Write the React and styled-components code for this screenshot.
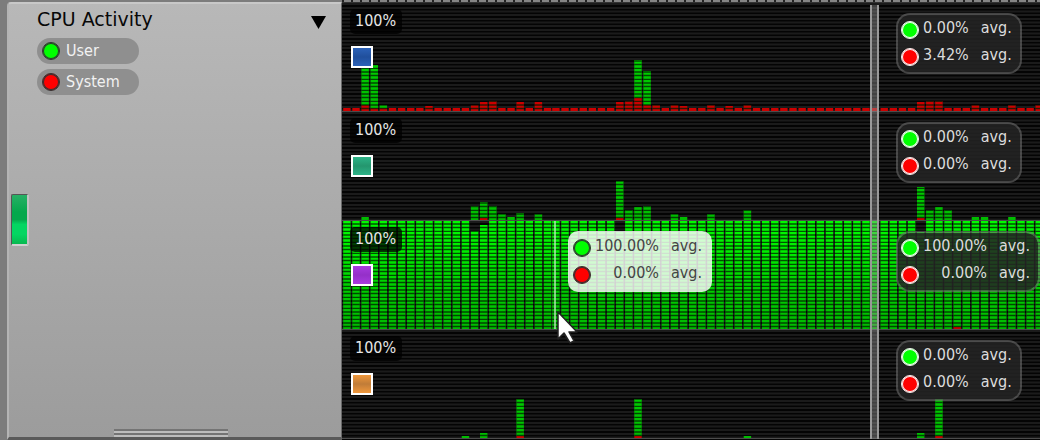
import React from "react";
import styled, { createGlobalStyle, css } from "styled-components";

const GlobalStyle = createGlobalStyle`
  * { box-sizing: border-box; }
  body {
    margin: 0;
    background: #050505;
    color: #ddd;
    font: 16px/20px "DejaVu Sans Condensed", "DejaVu Sans", sans-serif;
  }
  h1, ul, p { margin: 0; padding: 0; }
`;

const Page = styled.main`
  display: grid;
  grid-template-columns: 342px 1fr;
  min-height: 100vh;
  overflow: hidden;
`;

const Sidebar = styled.aside`
  display: flex;
  padding: 2px 0 0 7px;
  background: #7c7c7c;
`;

const Panel = styled.section`
  flex: 1;
  display: grid;
  grid-template-columns: 28px 1fr;
  grid-template-rows: 1fr auto;
  border: 2px solid #c8c8c8;
  border-right: 1px solid #686868;
  border-bottom: 3px solid #5a5a5a;
  border-left-color: #b4b4b4;
  border-radius: 4px 0 0 0;
  background: linear-gradient(#b8b8b8, #9c9c9c);
`;

const Level = styled.div`
  align-self: center;
  width: 18px;
  height: 52px;
  margin: 6px 0 0 2px;
  border: 1px solid #555;
  border-right: 2px solid #c2c2c2;
  border-bottom: 2px solid #d0d0d0;
  border-radius: 2px;
  background: linear-gradient(#27b066, #04a84c 35%, #04a84c 50%, #04d662 60%, #04d662 80%, #08b850);
`;

const Content = styled.div`
  display: flex;
  flex-direction: column;
  gap: 5px;
  padding: 1px 15px 0 0;
`;

const Header = styled.header`
  display: flex;
  justify-content: space-between;
  align-items: center;
  height: 28px;
`;

const Title = styled.h1`
  color: #080808;
  font: 19px/26px "DejaVu Sans", sans-serif;
`;

const Disclosure = styled.button`
  display: flex;
  padding: 6px 0 0;
  border: 0;
  background: none;
`;

const Legend = styled.ul`
  display: flex;
  flex-direction: column;
  gap: 5px;
  list-style: none;
`;

const LegendItem = styled.li`
  display: flex;
  align-items: center;
  gap: 6px;
  width: 102px;
  height: 26px;
  padding-left: 5px;
  border-radius: 13px;
  background: #8f8f8f;
  color: #f2f2f2;
`;

const Dot = styled.span`
  flex: none;
  width: 18px;
  height: 18px;
  border: 1px solid ${(p) => p.$ring};
  border-radius: 50%;
  background: ${(p) => p.$color};
  box-shadow: inset 0 0 0 1px ${(p) => p.$ring};
`;

const Grip = styled.div`
  grid-column: 1 / -1;
  justify-self: center;
  width: 114px;
  height: 8px;
  margin-right: 9px;
  border: solid #747474;
  border-width: 2px 0 0;
  background: linear-gradient(#bdbdbd 2px, #747474 2px 4px, #bdbdbd 4px);
`;

const Charts = styled.section`
  position: relative;
  min-width: 0;
  overflow: hidden;
`;

const Ruler = styled.div`
  height: 3px;
  border-bottom: 1px solid #333;
  background: repeating-linear-gradient(90deg, #222 0 2px, #858585 2px 9px);
`;

const Lane = styled.article`
  position: relative;
  display: flex;
  flex-direction: column;
  align-items: flex-start;
  gap: 12px;
  height: 109px;
  padding: 6px 8px;
  border-bottom: 1px solid #4c4c4c;
`;

const Plot = styled.svg`
  position: absolute;
  inset: 0;
  width: 100%;
  height: 100%;
`;

const Scale = styled.p`
  position: relative;
  height: 25px;
  padding: 2px 6px 3px 5px;
  border-radius: 5px;
  background: rgba(0, 0, 0, 0.75);
  color: #e6e6e6;
`;

const Swatch = styled.span`
  position: relative;
  width: 22px;
  height: 22px;
  margin-left: 1px;
  border: 2px solid #fff;
  background: linear-gradient(${(p) => p.$tone[0]}, ${(p) => p.$tone[1]} 50%, ${(p) => p.$tone[0]});
`;

const Readout = styled.div`
  position: absolute;
  top: 10px;
  left: ${(p) => p.$left}px;
  display: flex;
  flex-direction: column;
  gap: 7px;
  padding: 3px 8px 7px 3px;
  border: 2px solid rgba(110, 110, 110, 0.6);
  border-radius: 14px;
  background: rgba(36, 36, 36, 0.86);
  background-clip: padding-box;
  color: #dcdcdc;
  ${(p) =>
    p.$light &&
    css`
      border-color: transparent;
      border-radius: 10px;
      background: rgba(255, 255, 255, 0.82);
      color: #444;
    `}
`;

const ReadoutRow = styled.p`
  display: flex;
  justify-content: space-between;
  height: 20px;
  white-space: pre;
`;

const Value = styled.span`
  flex: 1;
  margin: 0 12px 0 4px;
  text-align: right;
`;

const ReadoutDot = styled(Dot)`
  margin-top: 3px;
`;

const Scrubber = styled.div`
  position: absolute;
  top: 5px;
  bottom: 1px;
  left: 528px;
  width: 9px;
  border: solid #999;
  border-width: 0 2px;
  background: rgba(160, 160, 160, 0.4);
`;

const HoverLine = styled.div`
  position: absolute;
  top: 0;
  bottom: 0;
  left: 212px;
  width: 2px;
  background: rgba(190, 235, 190, 0.7);
`;

const Pointer = styled.svg`
  position: absolute;
  top: 309px;
  left: 213px;
`;

const SPAN = 108;
const PITCH = 9.12;
const FIRST_RUN = 23;
const SAMPLES = 78;

// Samples are drawn in two runs, split where the pointer line sits.
const sampleX = (i) => (i < FIRST_RUN ? 1.2 + i * PITCH : 210.2 + (i - FIRST_RUN) * PITCH);

// Each entry maps a sample index to [total height, system height].
const lanes = [
  {
    id: "cpu0",
    tone: ["#2c62b8", "#204f9c"],
    base: [3, 3],
    user: "0.00%",
    system: "3.42%",
    data: {
      2: [46, 6], 3: [46, 3], 4: [6, 3], 9: [5, 5], 14: [6, 6], 15: [9, 9], 16: [10, 10],
      19: [9, 9], 21: [9, 9], 30: [9, 9], 31: [10, 10], 32: [51, 13], 33: [40, 6], 34: [6, 6],
      36: [6, 6], 37: [5, 5], 40: [6, 6], 42: [5, 5], 44: [6, 6], 63: [9, 9], 64: [10, 10],
      65: [10, 10], 69: [6, 6], 73: [6, 6], 76: [6, 6],
    },
  },
  {
    id: "cpu1",
    tone: ["#2db387", "#24966e"],
    base: [0, 0],
    user: "0.00%",
    system: "0.00%",
    data: {
      2: [3, 0], 14: [14, 0], 15: [18, 2], 16: [14, 0], 17: [6, 0], 18: [3, 0], 19: [7, 0],
      21: [6, 0], 30: [39, 2], 31: [10, 0], 32: [13, 0], 33: [14, 0], 36: [6, 0], 37: [3, 0],
      40: [6, 0], 44: [10, 0], 63: [33, 2], 64: [10, 0], 65: [13, 0], 66: [10, 0], 69: [3, 0],
      70: [3, 0], 73: [3, 0],
    },
  },
  {
    id: "cpu2",
    tone: ["#a83be0", "#9430c8"],
    base: [SPAN, 0],
    user: "100.00%",
    system: "0.00%",
    data: { 14: [98, 0], 15: [104, 0], 30: [97, 0], 63: [97, 0], 67: [SPAN, 2] },
  },
  {
    id: "cpu3",
    tone: ["#f0983c", "#c07c38"],
    base: [0, 0],
    user: "0.00%",
    system: "0.00%",
    data: { 13: [2, 0], 15: [5, 0], 19: [39, 2], 32: [39, 2], 44: [2, 0], 63: [5, 0], 65: [39, 2] },
  },
];

function Graph({ lane }) {
  const { id, base, data } = lane;
  const bars = Array.from({ length: SAMPLES }, (_, i) => {
    const [total, system] = data[i] || base;
    return { i, total, system };
  });
  return (
    <Plot aria-hidden="true">
      <defs>
        <linearGradient id={`${id}-user`} gradientUnits="userSpaceOnUse" x1="0" y1="0" x2="0" y2={SPAN}>
          <stop offset="0" stopColor="#00fc00" />
          <stop offset="0.3" stopColor="#00ec00" />
          <stop offset="0.65" stopColor="#00cc00" />
          <stop offset="1" stopColor="#00bc00" />
        </linearGradient>
        <pattern id={`${id}-back`} patternUnits="userSpaceOnUse" width="8" height="11">
          <rect width="8" height="11" fill="#040404" />
          <path d="M0 1h8M0 5h8M0 8.500h8" stroke="#1b1b1b" strokeWidth="2" />
        </pattern>
        <pattern id={`${id}-gaps`} patternUnits="userSpaceOnUse" width="8" height="11">
          <path d="M0 3h8M0 6.500h8M0 10.500h8" stroke="#001c00" strokeOpacity="0.75" strokeWidth="1.300" />
        </pattern>
      </defs>
      <rect width="100%" height="100%" fill={`url(#${id}-back)`} />
      {bars.map(({ i, total, system }) => (
        <React.Fragment key={i}>
          {total > system && (
            <rect x={sampleX(i)} y={SPAN - total} width="7.400" height={total - system} fill={`url(#${id}-user)`} />
          )}
          {system > 0 && <rect x={sampleX(i)} y={SPAN - system} width="7.400" height={system} fill="#cc0000" />}
          {total > 3 && (
            <rect x={sampleX(i)} y={SPAN - total} width="7.400" height={total} fill={`url(#${id}-gaps)`} />
          )}
        </React.Fragment>
      ))}
    </Plot>
  );
}

function Averages({ user, system, left, light }) {
  const ring = light ? "#333" : "#f4f4f4";
  return (
    <Readout $left={left} $light={light}>
      <ReadoutRow>
        <ReadoutDot $color="#0f0" $ring={ring} />
        <Value>{user}</Value>
        <span>avg.</span>
      </ReadoutRow>
      <ReadoutRow>
        <ReadoutDot $color="#f00" $ring={ring} />
        <Value>{system}</Value>
        <span>avg.</span>
      </ReadoutRow>
    </Readout>
  );
}

export default function App() {
  return (
    <Page>
      <GlobalStyle />
      <Sidebar>
        <Panel>
          <Level aria-hidden="true" />
          <Content>
            <Header>
              <Title>CPU Activity</Title>
              <Disclosure type="button" aria-label="Collapse CPU Activity">
                <svg width="15" height="13" viewBox="0 0 15 13" aria-hidden="true">
                  <path d="M0 0h15L7.500 13z" fill="#000" />
                </svg>
              </Disclosure>
            </Header>
            <Legend>
              <LegendItem>
                <Dot $color="#0f0" $ring="#333" />
                User
              </LegendItem>
              <LegendItem>
                <Dot $color="#f00" $ring="#333" />
                System
              </LegendItem>
            </Legend>
          </Content>
          <Grip />
        </Panel>
      </Sidebar>
      <Charts>
        <Ruler />
        {lanes.map((lane) => (
          <Lane key={lane.id}>
            <Graph lane={lane} />
            <Scale>100%</Scale>
            <Swatch $tone={lane.tone} />
            {lane.id === "cpu2" && (
              <>
                <HoverLine />
                <Averages user="100.00%" system="0.00%" left={226} light />
              </>
            )}
            <Averages user={lane.user} system={lane.system} left={554} />
          </Lane>
        ))}
        <Scrubber />
        <Pointer width="24" height="38" viewBox="0 0 24 38" aria-hidden="true">
          <path
            d="M3 3v27l6-6 6 10 4-2-5-9h8z"
            fill="#fff"
            stroke="#222"
            strokeWidth="1.500"
            strokeLinejoin="round"
          />
        </Pointer>
      </Charts>
    </Page>
  );
}
